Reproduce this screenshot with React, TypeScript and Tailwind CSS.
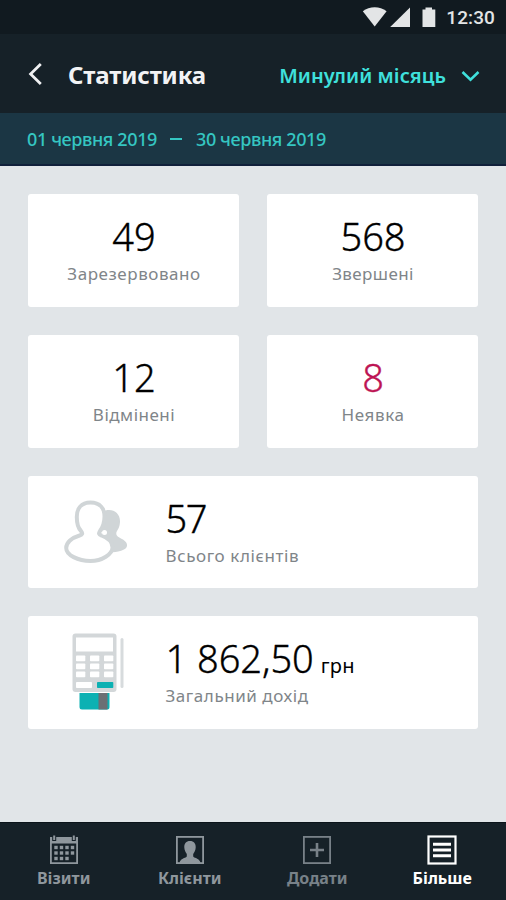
import type { ReactNode } from "react";
import clsx from "clsx";

const STATS = [
  { value: "49", label: "Зарезервовано", labelClass: "tracking-[0.55px]" },
  { value: "568", label: "Звершені", labelClass: "tracking-[0.4px]" },
  { value: "12", label: "Відмінені", labelClass: "tracking-[0.5px]" },
  { value: "8", label: "Неявка", labelClass: "tracking-[0.6px]", danger: true },
];

const VALUE_CLASS = "text-[38px] font-light leading-[38px] [-webkit-text-stroke:0.35px_currentColor]";

function StatusBar() {
  return (
    <div className="flex h-[34px] items-center justify-end bg-[#111a20] pr-[11px] text-[#e3e5e6]">
      <svg width="74" height="24" viewBox="0 0 74 24" fill="currentColor">
        <path d="M0.8 6.2C7.5 0.8 17.8 0.8 24.6 6.2L12.7 21.6Z" />
        <path d="M48 2.500V22H28.2Z" />
        <path d="M60.5 4.5H63.5V2.5H70V4.5H73.3V22H60.5Z" />
      </svg>
      <span className="ml-[10px] font-[Roboto] text-[19px] font-medium leading-none tracking-[0.1px]">12:30</span>
    </div>
  );
}

function Header() {
  return (
    <header className="flex h-[79px] items-center bg-[#162128] pl-[28px] pr-[26px]">
      <button type="button" aria-label="Назад" className="text-[#f0f1f3]">
        <svg width="15" height="24" viewBox="0 0 15 24" fill="none" stroke="currentColor" strokeWidth="2.8">
          <path d="M12.8 2L2.6 12L12.8 22" />
        </svg>
      </button>
      <h1 className="ml-[25px] pt-[2px] text-[24px] font-bold leading-none tracking-[-0.15px] text-[#f2f3f5]">Статистика</h1>
      <button type="button" className="ml-auto flex items-center pt-[5px] text-[#3fe0dc]">
        <span className="text-[20px] font-semibold leading-none tracking-[0.05px]">Минулий місяць</span>
        <svg className="ml-[15px]" width="19" height="12" viewBox="0 0 19 12" fill="none" stroke="currentColor" strokeWidth="2.6">
          <path d="M1.5 2L9.5 9.6L17.5 2" />
        </svg>
      </button>
    </header>
  );
}

function DateRange() {
  return (
    <div className="flex h-[53px] items-center border-b-2 border-[#10203a] bg-[#1b3644] pl-[27px] text-[18px] font-medium leading-none tracking-[-0.38px] text-[#35c6c2]">
      <span>01 червня 2019</span>
      <span className="ml-[13px] mr-[14px] h-[2px] w-[12px] bg-[#35c6c2]" />
      <span>30 червня 2019</span>
    </div>
  );
}

function Card({ className, children }: { className?: string; children: ReactNode }) {
  return <div className={clsx("h-[112.75px] rounded-[3px] bg-white", className)}>{children}</div>;
}

function ClientsIcon() {
  return (
    <svg width="64" height="64" viewBox="0 0 64 64" fill="#d0d5d7">
      <path d="M38 12C47 7 56.500 12 56 22C55.500 28 54 29 52.500 32C51.500 36 54 37 59 39.500C64.500 43 64 47.500 60 49.500C55 52 50 52.500 46 52L38 34Z" />
      <path
        d="M26.500 2.500C17 2.500 12.800 9 12.800 17C12.800 24 14 28 17 31C19 33.500 18.500 34.500 15.500 35.500C7 38 2.200 43 2.200 48C2.200 55 14 61 26.500 61C38 61 48.500 54 48.500 47.500C48.500 42 44 38 37.500 35.500C34.500 34.500 34.500 33.500 36 31C39 27 40.500 23 40.500 16.500C40.500 8.500 36 2.500 26.500 2.500Z"
        fill="#fff"
        stroke="#d0d5d7"
        strokeWidth="4"
      />
      <circle cx="40.500" cy="32.500" r="2.500" fill="#fff" />
    </svg>
  );
}

function TerminalIcon() {
  const keys = [0, 1, 2].flatMap((row) => [0, 1, 2].map((col) => ({ x: 4 + col * 14, y: 22.5 + row * 8 })));
  return (
    <svg width="52" height="77" viewBox="0 0 52 77">
      <rect x="0.500" y="0.500" width="44" height="58.500" rx="3" fill="#d3d7d9" />
      <rect x="4" y="4.500" width="37" height="14" fill="#fff" />
      {keys.map((key) => (
        <rect key={`${key.x}-${key.y}`} x={key.x} y={key.y} width="9.300" height="5.800" rx="0.800" fill="#fff" />
      ))}
      <rect x="4" y="49" width="16" height="6" rx="0.800" fill="#fff" />
      <rect x="25" y="49" width="16.300" height="6" rx="0.800" fill="#0cb1b3" />
      <rect x="48.500" y="5" width="3" height="50" rx="1.500" fill="#d7dbdd" />
      <path d="M7.500 60H37.500V74Q37.500 76.500 35 76.500H10Q7.500 76.500 7.500 74Z" fill="#0cb1b3" />
      <rect x="26.500" y="60" width="9" height="16.500" fill="#6b6f74" />
    </svg>
  );
}

function CalendarIcon() {
  const dots = [0, 1, 2].flatMap((row) => [0, 1, 2, 3].map((col) => ({ row, col }))).filter((d) => !(d.row === 2 && d.col === 3));
  return (
    <svg width="30" height="30" viewBox="0 0 30 30" fill="currentColor">
      <path d="M1 2H29V29H1ZM2.800 8.500V27.200H27.200V8.500Z" fillRule="evenodd" />
      <path d="M3.200 0H7.200V6H3.200ZM22.800 0H26.800V6H22.800Z" fill="#162128" />
      <path d="M4.200 0.500H6.200V5H4.200ZM23.800 0.500H25.800V5H23.800Z" />
      {dots.map(({ row, col }) => (
        <rect key={`${row}-${col}`} x={5.3 + col * 5.5} y={10.8 + row * 5.5} width="3.400" height="3.400" />
      ))}
    </svg>
  );
}

function ClientIcon() {
  return (
    <svg width="30" height="30" viewBox="0 0 30 30" fill="currentColor">
      <rect x="1.900" y="1.900" width="26.200" height="26.200" fill="none" stroke="currentColor" strokeWidth="1.800" />
      <path d="M15 6C18.800 6 20.900 8.500 20.700 12.500C20.600 15.500 19.200 17.500 18.200 19V21.500C20 23.500 24.500 23 25.500 28H4.500C5.500 23 10 23.500 11.800 21.500V19C10.800 17.500 9.400 15.500 9.300 12.500C9.100 8.500 11.200 6 15 6Z" />
    </svg>
  );
}

function AddIcon() {
  return (
    <svg width="30" height="30" viewBox="0 0 30 30" fill="none" stroke="currentColor">
      <rect x="1.900" y="1.900" width="26.200" height="26.200" strokeWidth="1.800" />
      <path d="M15 8V22M8 15H22" strokeWidth="2.600" />
    </svg>
  );
}

function MoreIcon() {
  return (
    <svg width="30" height="30" viewBox="0 0 30 30" fill="none" stroke="currentColor">
      <rect x="1.500" y="1.500" width="27" height="27" strokeWidth="2.200" />
      <path d="M6 9.200H24M6 15H24M6 20.800H24" strokeWidth="3" />
    </svg>
  );
}

const TABS = [
  { label: "Візити", icon: <CalendarIcon />, className: "text-[#8f979d] pl-px" },
  { label: "Клієнти", icon: <ClientIcon />, className: "text-[#8f979d]" },
  { label: "Додати", icon: <AddIcon />, className: "text-[#788188] pl-[2px]" },
  { label: "Більше", icon: <MoreIcon />, className: "text-white pr-px" },
];

function TabBar() {
  return (
    <nav className="grid h-[78px] grid-cols-4 border-t border-[#0b141a] bg-[#162128]">
      {TABS.map((tab) => (
        <button key={tab.label} type="button" className={clsx("flex flex-col items-center pt-[12px]", tab.className)}>
          {tab.icon}
          <span className="mt-[3px] text-[16px] font-bold leading-[20px]">{tab.label}</span>
        </button>
      ))}
    </nav>
  );
}

export default function App() {
  return (
    <div className="flex h-[900px] w-[506px] flex-col overflow-hidden bg-[#e1e5e8] font-['Noto_Sans',sans-serif]">
      <StatusBar />
      <Header />
      <DateRange />

      <main className="flex flex-1 flex-col gap-[28px] px-[28px] pt-[28px]">
        <div className="grid grid-cols-2 gap-x-[28px] gap-y-[28px]">
          {STATS.map((stat) => (
            <Card key={stat.label} className="flex flex-col items-center pl-px pt-[23px]">
              <span className={clsx(VALUE_CLASS, stat.danger ? "text-[#bd1454]" : "text-black")}>{stat.value}</span>
              <span className={clsx("mt-[9px] text-[17px] leading-[20px] text-[#7f8589]", stat.labelClass)}>{stat.label}</span>
            </Card>
          ))}
        </div>

        <Card className="flex">
          <div className="w-[137.5px] pl-[36px] pt-[24px]">
            <ClientsIcon />
          </div>
          <div className="flex flex-col pt-[23px]">
            <span className={clsx(VALUE_CLASS, "tracking-[-1.5px] text-black")}>57</span>
            <span className="mt-[9px] text-[17px] leading-[20px] tracking-[0.6px] text-[#7f8589]">Всього клієнтів</span>
          </div>
        </Card>

        <Card className="flex">
          <div className="w-[137.5px] pl-[44px] pt-[17px]">
            <TerminalIcon />
          </div>
          <div className="flex flex-col pt-[23px]">
            <span className={clsx(VALUE_CLASS, "flex h-[38px] items-baseline whitespace-nowrap tracking-[-0.05px] text-black")}>
              1 862,50
              <span className="ml-[7px] text-[20px] font-normal leading-none tracking-[0.3px] [-webkit-text-stroke:0]">грн</span>
            </span>
            <span className="mt-[9px] text-[17px] leading-[20px] tracking-[0.55px] text-[#7f8589]">Загальний дохід</span>
          </div>
        </Card>
      </main>

      <TabBar />
    </div>
  );
}
